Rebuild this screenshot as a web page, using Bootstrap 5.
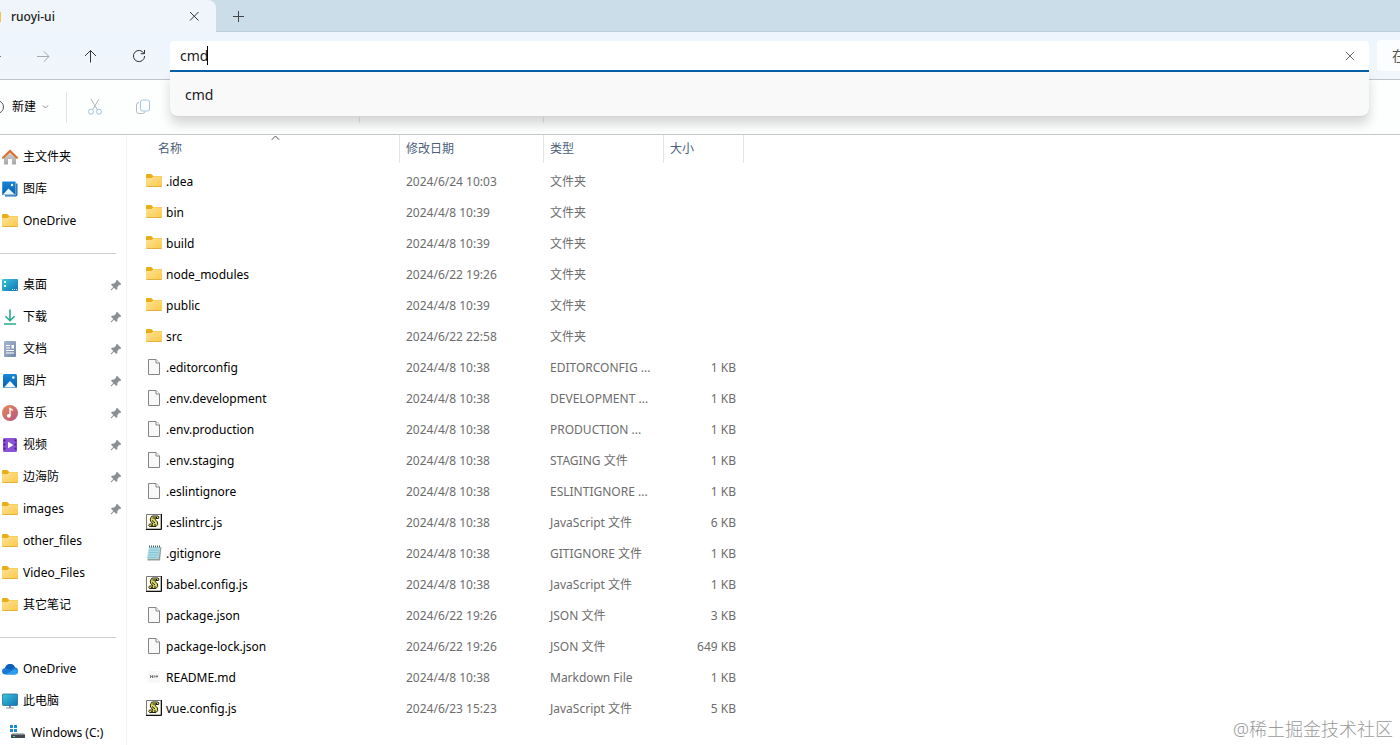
<!DOCTYPE html>
<html lang="zh-CN">
<head>
<meta charset="utf-8">
<meta name="viewport" content="width=device-width, initial-scale=1">
<title>ruoyi-ui</title>
<link href="https://cdn.jsdelivr.net/npm/bootstrap@5.3.0/dist/css/bootstrap.min.css" rel="stylesheet">
<style>
  body { font-family: "Noto Sans", "Noto Sans CJK SC", sans-serif; font-size: 12px; line-height: 16px; color: #000; background: #fff; }
  button, input { font-family: inherit; color: inherit; }
  svg { display: block; flex: none; }
  .tab-strip { height: 32px; background: #cbdde9; border-bottom: 1px solid #bccdd9; }
  .win-tab { width: 216px; height: 32px; padding: 2px 14px 0 0; gap: 9px; background: #f0f5fb; border-radius: 0 8px 0 0; font-weight: 500; color: #1b1b1b; }
  .plain-btn { border: 0; background: none; padding: 0; display: flex; align-items: center; justify-content: center; }
  .new-tab { width: 44px; height: 32px; }
  .nav-row { height: 48px; background: linear-gradient(#edf5fd, #f1f6fc); border-bottom: 1px solid #bfc5ca; }
  .nav-btn { width: 48px; height: 48px; }
  .nav-btn.cut-left { width: 19px; justify-content: flex-start; }
  .address { height: 31px; margin: 2px 8px 0 7px; }
  .address input { height: 31px; width: 100%; border: 0; border-bottom: 2px solid #0560a8; border-radius: 4px 4px 0 0; padding: 0 40px 0 10px; font-size: 14px; line-height: 20px; color: #1b1b1b; background: #fff; outline: 0; }
  .caret-bar { left: 37px; top: 5px; width: 1px; height: 19px; background: #000; }
  .clear-btn { right: 8px; top: 4px; width: 22px; height: 22px; }
  .suggest { left: 0; right: 0; top: 31px; height: 45px; background: #f9f9f9; border-bottom: 1px solid #d4d4d4; border-radius: 0 0 8px 8px; box-shadow: 0 7px 12px rgba(0,0,0,.16); z-index: 5; }
  .suggest a { padding: 13px 15px; font-size: 14px; line-height: 20px; color: #1b1b1b; text-decoration: none; }
  .find-box { width: 23px; height: 31px; border: 0; border-radius: 4px 0 0 4px; background: #fbfdff; padding: 0 0 0 15px; font-size: 14px; outline: 0; }
  .find-box::placeholder { color: #555; opacity: 1; }
  .tool-row { height: 55px; background: #fdfefe; border-bottom: 1px solid #c4c8ca; }
  .tool-row .rule { width: 1px; height: 31px; background: #e3e5e8; }
  .tool-group { width: 183px; }
  .tool-group-first { width: 292px; }
  .tool-btn { width: 48px; height: 40px; }
  .side { width: 127px; padding-top: 6px; border-right: 1px solid #f3f3f3; }
  .side a { height: 32px; padding: 0 4px 0 2px; gap: 5px; color: #000; text-decoration: none; white-space: nowrap; }
  .side .sub-item { padding-left: 10px; }
  .side hr { margin: 16px 10px 15px 0; border-top: 1px solid #cdcdcd; opacity: 1; }
  .files { width: 617px; table-layout: fixed; border-collapse: collapse; color: #6d6d6d; white-space: nowrap; }
  .files th { height: 31px; padding: 0 0 3px; font-weight: 400; color: #4c607a; }
  .files th div { height: 28px; padding: 6px; border-right: 1px solid #e3e5e8; }
  .files th:first-child div { padding-left: 31px; }
  .files td { height: 31px; padding: 0 6px; }
  .files td:first-child { padding-left: 19px; }
  .files td:last-child { padding-right: 8px; text-align: right; }
  .files a { color: #000; text-decoration: none; gap: 4px; }
  .files svg { margin-bottom: 2px; }
  .sort-mark { left: 144px; top: 0; }
  .watermark { right: 7px; bottom: 4px; font-size: 18px; line-height: 24px; font-weight: 300; color: #9a9a9a; }
</style>
</head>
<body class="vh-100 overflow-hidden d-flex flex-column position-relative">
<svg width="0" height="0" class="position-absolute" aria-hidden="true">
  <defs>
    <linearGradient id="gFolder" x1="0" y1="0" x2="1" y2="1"><stop offset="0" stop-color="#ffe394"/><stop offset="1" stop-color="#fbc94b"/></linearGradient>
    <linearGradient id="gBlue" x1="0" y1="0" x2="0" y2="1"><stop offset="0" stop-color="#1686d6"/><stop offset="1" stop-color="#0b62ae"/></linearGradient>
    <linearGradient id="gTeal" x1="0" y1="0" x2="1" y2="1"><stop offset="0" stop-color="#3bc7d8"/><stop offset="1" stop-color="#0f73b4"/></linearGradient>
    <linearGradient id="gMusic" x1="0" y1="0" x2="1" y2="1"><stop offset="0" stop-color="#e58a52"/><stop offset="1" stop-color="#b55589"/></linearGradient>
    <linearGradient id="gHome" x1="0" y1="0" x2="0" y2="1"><stop offset="0" stop-color="#d8d8d8"/><stop offset="1" stop-color="#a5a5a5"/></linearGradient>
    <linearGradient id="gDoc" x1="0" y1="0" x2="1" y2="1"><stop offset="0" stop-color="#a6b8cf"/><stop offset="1" stop-color="#7488a8"/></linearGradient>
    <symbol id="folder" viewBox="0 0 16 16"><path d="M0 2.100Q0 1 1.200 1H5.300L7.200 2.900H15Q16 2.900 16 3.900V8H0z" fill="#e9ae14"/><path d="M0 5.100H5.500L7.300 3.300H15.200Q16 3.300 16 4.200V13Q16 14 15 14H1Q0 14 0 13z" fill="url(#gFolder)"/><path d="M.5 13.500h15" stroke="#e5b13d"/></symbol>
    <symbol id="page" viewBox="0 0 16 16"><path d="M2.500.5H10L13.500 4V15.500H2.500z" fill="#f9f9f9" stroke="#858585"/><path d="M10 .5V4h3.500" fill="#fff" stroke="#858585"/></symbol>
    <symbol id="script" viewBox="0 0 16 16"><path d="M.5.5h14.500v14.500H.5z" fill="#fffef0" stroke="#777"/><path d="M15.500 0v15.500H0" fill="none" stroke="#111"/><path d="M5 3.500Q5 2 7 2h5Q13.500 2.500 12.500 4.500H10.500L9 5.500 11.500 8Q12.500 11 10 12.500H3.500Q2 11.500 3.500 10H7L4.500 7Q4 5 5 3.500z" fill="#dfdc55" stroke="#222"/><path d="M6.500 4h3.500M6 6.500l3 2.500M8 11h2M10.500 3v2M5 12l2-1" stroke="#111" fill="none"/></symbol>
    <symbol id="notepad" viewBox="0 0 16 16"><path d="M4 2H15.500L14 15.500H1.500z" fill="#9b9c92"/><path d="M3 2H14.500L12.500 14H.8z" fill="#a9dae4"/><path d="M3.500 5h9.500M3 7.500h9.500M2.500 10h9.500M2 12.500h9" stroke="#84c0ce" stroke-width=".8"/><path d="M3.500.5v2M5.500.5v2M7.500.5v2M9.500.5v2M11.500.5v2M13.500.5v2" stroke="#52666b"/></symbol>
    <symbol id="readme" viewBox="0 0 16 16"><rect x="2" y="2" width="12" height="12" rx="2" fill="#f7f7f7"/><path d="M4.500 9V6.500L5.500 8 6.500 6.500V9M8 6.500v2M9 6.500v2M11 6v2.500M10 7.500h2" stroke="#777" fill="none"/></symbol>
    <symbol id="pin" viewBox="0 0 12 12"><path d="M7 .8 11.200 5 10.200 6 9.500 5.800 7.500 7.800 7.300 10 6.300 11 4 8.700 1.200 11.500.5 11 3.300 8 1 5.700 2 4.700 4.200 4.500 6.200 2.500 6 1.800z" fill="#8b8e92"/></symbol>
    <symbol id="picture" viewBox="0 0 16 16"><rect x="1" y="1" width="14" height="14" rx="1.500" fill="url(#gBlue)"/><path d="M2 14.500 7.200 8.700Q8 8 8.800 8.700L14 14.500z" fill="#f1faff"/><circle cx="11.300" cy="4.500" r="1.300" fill="#fff"/></symbol>
  </defs>
</svg>

<header>
  <div class="tab-strip d-flex">
    <div class="win-tab d-flex align-items-center">
      <svg width="2" height="14" aria-hidden="true"><rect y="2" width="1" height="10" fill="#f3c646"/></svg>
      <span class="flex-grow-1">ruoyi-ui</span>
      <button class="plain-btn" type="button" aria-label="关闭标签页"><svg width="16" height="16" viewBox="0 0 16 16" fill="none" stroke="#333"><path d="M4 3l8.500 8.500M12.500 3 4 11.500"/></svg></button>
    </div>
    <button class="plain-btn new-tab" type="button" aria-label="新标签页"><svg width="12" height="12" viewBox="0 0 12 12" stroke="#444"><path d="M6.500 1v11M1 6.500h11"/></svg></button>
  </div>

  <nav class="nav-row d-flex align-items-center" aria-label="导航">
    <button class="plain-btn nav-btn cut-left" type="button" aria-label="后退"><svg width="2" height="12" stroke="#777"><path d="M0 6.500h1"/></svg></button>
    <button class="plain-btn nav-btn" type="button" aria-label="前进"><svg width="14" height="14" viewBox="0 0 14 14" fill="none" stroke="#a5aab0"><path d="M1 7.500h12M7.800 2.300 13 7.500l-5.200 5.200"/></svg></button>
    <button class="plain-btn nav-btn" type="button" aria-label="向上"><svg width="14" height="14" viewBox="0 0 14 14" fill="none" stroke="#333"><path d="M6.500 13.500V1.500M1 7 6.500 1.500 12 7"/></svg></button>
    <button class="plain-btn nav-btn" type="button" aria-label="刷新"><svg width="14" height="14" viewBox="0 0 14 14" fill="none" stroke="#333"><path d="M12 4.500A5.600 5.600 0 1 0 12.600 7M12.500 1v3.700H8.800"/></svg></button>
    <div class="address flex-grow-1 position-relative">
      <input type="text" value="cmd" aria-label="地址">
      <span class="caret-bar position-absolute"></span>
      <button class="plain-btn clear-btn position-absolute" type="button" aria-label="清除"><svg width="10" height="10" viewBox="0 0 10 10" stroke="#666"><path d="M.8.8l8.400 8.400M9.200.8.8 9.200"/></svg></button>
      <div class="suggest position-absolute"><a class="d-block" href="#">cmd</a></div>
    </div>
    <input class="find-box" type="text" placeholder="在" aria-label="搜索">
  </nav>

  <div class="tool-row d-flex align-items-center">
    <button class="plain-btn" type="button"><svg width="12" height="16" viewBox="0 0 12 16" fill="none" stroke="#555"><circle cx="-3" cy="8" r="6.500"/></svg>新建<svg class="ms-1" width="10" height="8" viewBox="0 0 10 8" fill="none" stroke="#8a8d91"><path d="M3 2.500 5.500 5 8 2.500"/></svg></button>
    <span class="rule ms-3"></span>
    <div class="tool-group-first d-flex">
      <button class="plain-btn tool-btn ms-1" type="button" aria-label="剪切"><svg width="16" height="18" viewBox="0 0 16 18" fill="none"><path d="M4 1l6.500 11M12 1 5.500 12" stroke="#b2b8c0"/><circle cx="4" cy="13.700" r="2.500" stroke="#9cc5e4"/><circle cx="12" cy="13.700" r="2.500" stroke="#9cc5e4"/></svg></button>
      <button class="plain-btn tool-btn" type="button" aria-label="复制"><svg width="16" height="16" viewBox="0 0 16 16" fill="none"><path d="M4 3.500Q1.500 3.500 1.500 6v6Q1.500 14.500 4 14.500h3.500Q9.500 14.500 10 12.500" stroke="#b8bdc4"/><rect x="5.500" y="1" width="9" height="11" rx="2" stroke="#a6c8e2"/></svg></button>
    </div>
    <span class="rule"></span>
    <div class="tool-group"></div>
    <span class="rule"></span>
  </div>
</header>

<main class="d-flex flex-grow-1 overflow-hidden">
  <nav class="side flex-shrink-0 overflow-hidden" aria-label="文件夹">
    <a class="d-flex align-items-center" href="#"><svg width="16" height="16" viewBox="0 0 16 16"><path d="M2 7 8 2l6 5v8.500H10V10H6v5.500H2z" fill="url(#gHome)"/><path d="M1 8.700 8 2l7 6.700" fill="none" stroke="#dc6d2c" stroke-width="2" stroke-linecap="round"/></svg>主文件夹</a>
    <a class="d-flex align-items-center" href="#"><svg width="16" height="16" viewBox="0 0 16 16"><path d="M3 2.500h12.500v11q0 2-2 2H3z" fill="#1269b3"/><path d="M0 1.500Q0 .3 1.200.3H12.500q1.300 0 1.300 1.200V14H0z" fill="url(#gBlue)" stroke="#eaf6ff" stroke-width=".5"/><path d="M1 13.500 6.500 7.500 12.800 13.500z" fill="#e9f7ff"/><circle cx="10" cy="4" r="1.200" fill="#fff"/></svg>图库</a>
    <a class="d-flex align-items-center" href="#"><svg width="16" height="16"><use href="#folder"/></svg>OneDrive</a>
    <hr>
    <a class="d-flex align-items-center" href="#"><svg width="16" height="16" viewBox="0 0 16 16"><rect y="2" width="16" height="12" rx="1" fill="url(#gTeal)"/><path d="M2 4h2v2H2zM2 8h2v2H2z" fill="#d8f8ff"/><path d="M10 12.500h1M12 12.500h1M14 12.500h1" stroke="#d8f8ff"/></svg><span class="flex-grow-1">桌面</span><svg width="12" height="12"><use href="#pin"/></svg></a>
    <a class="d-flex align-items-center" href="#"><svg width="16" height="16" viewBox="0 0 16 16" fill="none" stroke="#25aa90" stroke-width="1.600"><path d="M8 .5v11M3.500 7.200 8 11.700l4.500-4.500M2 15h12"/></svg><span class="flex-grow-1">下载</span><svg width="12" height="12"><use href="#pin"/></svg></a>
    <a class="d-flex align-items-center" href="#"><svg width="16" height="16" viewBox="0 0 16 16"><rect x="2" y="0" width="12" height="16" rx="1" fill="url(#gDoc)"/><path d="M4 4.500h4M4 7h4M4 9.500h8M4 12h8" stroke="#fff"/><path d="M9.500 4h2.500v3.500H9.500z" fill="#fff"/></svg><span class="flex-grow-1">文档</span><svg width="12" height="12"><use href="#pin"/></svg></a>
    <a class="d-flex align-items-center" href="#"><svg width="16" height="16"><use href="#picture"/></svg><span class="flex-grow-1">图片</span><svg width="12" height="12"><use href="#pin"/></svg></a>
    <a class="d-flex align-items-center" href="#"><svg width="16" height="16" viewBox="0 0 16 16"><circle cx="8" cy="8" r="8" fill="url(#gMusic)"/><circle cx="6.800" cy="10.800" r="1.900" fill="#fff"/><path d="M8 10.800V3.500l2.800 1.800" fill="none" stroke="#fff" stroke-width="1.400"/></svg><span class="flex-grow-1">音乐</span><svg width="12" height="12"><use href="#pin"/></svg></a>
    <a class="d-flex align-items-center" href="#"><svg width="16" height="16" viewBox="0 0 16 16"><rect x="1" y="1" width="14" height="14" rx="1.500" fill="#8b52d6"/><path d="M2.500 2.500v11M13.500 2.500v11" stroke="#4c1c92" stroke-width="1.800" stroke-dasharray="2 2"/><path d="M6 4.800 11.300 8 6 11.200z" fill="#fff"/></svg><span class="flex-grow-1">视频</span><svg width="12" height="12"><use href="#pin"/></svg></a>
    <a class="d-flex align-items-center" href="#"><svg width="16" height="16"><use href="#folder"/></svg><span class="flex-grow-1">边海防</span><svg width="12" height="12"><use href="#pin"/></svg></a>
    <a class="d-flex align-items-center" href="#"><svg width="16" height="16"><use href="#folder"/></svg><span class="flex-grow-1">images</span><svg width="12" height="12"><use href="#pin"/></svg></a>
    <a class="d-flex align-items-center" href="#"><svg width="16" height="16"><use href="#folder"/></svg>other_files</a>
    <a class="d-flex align-items-center" href="#"><svg width="16" height="16"><use href="#folder"/></svg>Video_Files</a>
    <a class="d-flex align-items-center" href="#"><svg width="16" height="16"><use href="#folder"/></svg>其它笔记</a>
    <hr>
    <a class="d-flex align-items-center" href="#"><svg width="16" height="16" viewBox="0 0 16 16"><path d="M3.500 13.500Q0 13.300 0 10.300 0 7.500 3 7 4.500 3 8.200 3q3.300 0 4.600 3.300Q16 6.800 16 10q0 3.500-3.500 3.500z" fill="#1b79d2"/><path d="M3 7Q4.500 3 8.200 3q3.300 0 4.600 3.300L9 9z" fill="#0b60bd"/><path d="M3.500 13.500 12.800 8Q16 9 15.900 11 15.500 13.500 12.500 13.500z" fill="#2a9ff0"/></svg>OneDrive</a>
    <a class="d-flex align-items-center" href="#"><svg width="16" height="16" viewBox="0 0 16 16"><path d="M7 12h2v3H7z" fill="#8796a3"/><path d="M4 15h8" stroke="#8796a3"/><rect x=".5" y="1" width="15" height="11.500" rx=".8" fill="url(#gTeal)" stroke="#23719d" stroke-width=".8"/></svg>此电脑</a>
    <a class="sub-item d-flex align-items-center" href="#"><svg width="16" height="16" viewBox="0 0 16 16"><path d="M0 0h3v3H0zM4 0h3v3H4zM0 4h3v3H0zM4 4h3v3H4z" fill="#168bd2"/><path d="M2 8h12l1 2H1z" fill="#b8bdc1"/><path d="M1 9.500h14V13H1z" fill="#42484d"/><path d="M3 11.500h2" stroke="#42e070"/></svg>Windows (C:)</a>
  </nav>

  <section class="flex-grow-1 position-relative">
    <table class="files">
      <colgroup><col style="width:273px"><col style="width:144px"><col style="width:120px"><col style="width:80px"></colgroup>
      <thead><tr><th scope="col"><div>名称</div></th><th scope="col"><div>修改日期</div></th><th scope="col"><div>类型</div></th><th scope="col"><div>大小</div></th></tr></thead>
      <tbody>
        <tr><td><a class="d-flex align-items-center" href="#"><svg width="16" height="16"><use href="#folder"/></svg>.idea</a></td><td>2024/6/24 10:03</td><td>文件夹</td><td></td></tr>
        <tr><td><a class="d-flex align-items-center" href="#"><svg width="16" height="16"><use href="#folder"/></svg>bin</a></td><td>2024/4/8 10:39</td><td>文件夹</td><td></td></tr>
        <tr><td><a class="d-flex align-items-center" href="#"><svg width="16" height="16"><use href="#folder"/></svg>build</a></td><td>2024/4/8 10:39</td><td>文件夹</td><td></td></tr>
        <tr><td><a class="d-flex align-items-center" href="#"><svg width="16" height="16"><use href="#folder"/></svg>node_modules</a></td><td>2024/6/22 19:26</td><td>文件夹</td><td></td></tr>
        <tr><td><a class="d-flex align-items-center" href="#"><svg width="16" height="16"><use href="#folder"/></svg>public</a></td><td>2024/4/8 10:39</td><td>文件夹</td><td></td></tr>
        <tr><td><a class="d-flex align-items-center" href="#"><svg width="16" height="16"><use href="#folder"/></svg>src</a></td><td>2024/6/22 22:58</td><td>文件夹</td><td></td></tr>
        <tr><td><a class="d-flex align-items-center" href="#"><svg width="16" height="16"><use href="#page"/></svg>.editorconfig</a></td><td>2024/4/8 10:38</td><td>EDITORCONFIG ...</td><td>1 KB</td></tr>
        <tr><td><a class="d-flex align-items-center" href="#"><svg width="16" height="16"><use href="#page"/></svg>.env.development</a></td><td>2024/4/8 10:38</td><td>DEVELOPMENT ...</td><td>1 KB</td></tr>
        <tr><td><a class="d-flex align-items-center" href="#"><svg width="16" height="16"><use href="#page"/></svg>.env.production</a></td><td>2024/4/8 10:38</td><td>PRODUCTION ...</td><td>1 KB</td></tr>
        <tr><td><a class="d-flex align-items-center" href="#"><svg width="16" height="16"><use href="#page"/></svg>.env.staging</a></td><td>2024/4/8 10:38</td><td>STAGING 文件</td><td>1 KB</td></tr>
        <tr><td><a class="d-flex align-items-center" href="#"><svg width="16" height="16"><use href="#page"/></svg>.eslintignore</a></td><td>2024/4/8 10:38</td><td>ESLINTIGNORE ...</td><td>1 KB</td></tr>
        <tr><td><a class="d-flex align-items-center" href="#"><svg width="16" height="16"><use href="#script"/></svg>.eslintrc.js</a></td><td>2024/4/8 10:38</td><td>JavaScript 文件</td><td>6 KB</td></tr>
        <tr><td><a class="d-flex align-items-center" href="#"><svg width="16" height="16"><use href="#notepad"/></svg>.gitignore</a></td><td>2024/4/8 10:38</td><td>GITIGNORE 文件</td><td>1 KB</td></tr>
        <tr><td><a class="d-flex align-items-center" href="#"><svg width="16" height="16"><use href="#script"/></svg>babel.config.js</a></td><td>2024/4/8 10:38</td><td>JavaScript 文件</td><td>1 KB</td></tr>
        <tr><td><a class="d-flex align-items-center" href="#"><svg width="16" height="16"><use href="#page"/></svg>package.json</a></td><td>2024/6/22 19:26</td><td>JSON 文件</td><td>3 KB</td></tr>
        <tr><td><a class="d-flex align-items-center" href="#"><svg width="16" height="16"><use href="#page"/></svg>package-lock.json</a></td><td>2024/6/22 19:26</td><td>JSON 文件</td><td>649 KB</td></tr>
        <tr><td><a class="d-flex align-items-center" href="#"><svg width="16" height="16"><use href="#readme"/></svg>README.md</a></td><td>2024/4/8 10:38</td><td>Markdown File</td><td>1 KB</td></tr>
        <tr><td><a class="d-flex align-items-center" href="#"><svg width="16" height="16"><use href="#script"/></svg>vue.config.js</a></td><td>2024/6/23 15:23</td><td>JavaScript 文件</td><td>5 KB</td></tr>
      </tbody>
    </table>
    <svg class="sort-mark position-absolute" width="9" height="6" viewBox="0 0 9 6" fill="none" stroke="#555"><path d="M.8 4.800 4.500 1l3.700 3.800"/></svg>
  </section>
</main>
<div class="watermark position-absolute">@稀土掘金技术社区</div>
<script src="https://cdn.jsdelivr.net/npm/bootstrap@5.3.0/dist/js/bootstrap.bundle.min.js"></script>
</body>
</html>
